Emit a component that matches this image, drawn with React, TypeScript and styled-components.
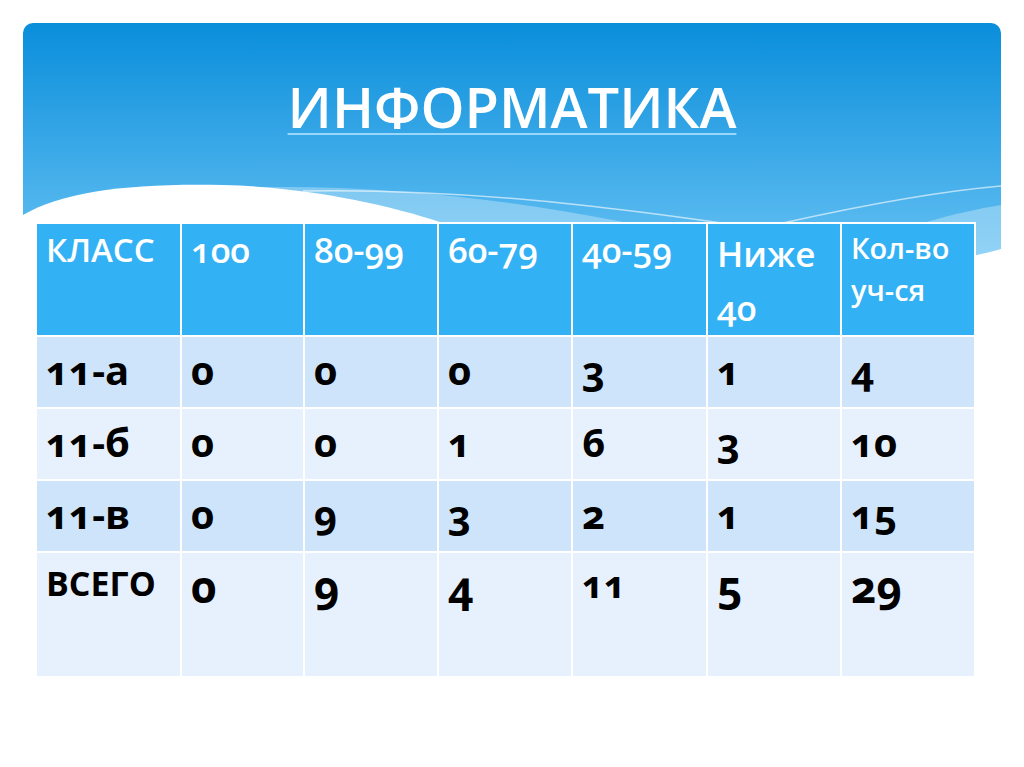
import styled, { createGlobalStyle } from 'styled-components';

const GlobalStyle = createGlobalStyle`
	html, body {
		margin: 0;
		padding: 0;
		background: #ffffff;
	}
	body {
		font-family: "Open Sans", "Noto Sans", "DejaVu Sans", sans-serif;
	}
`

type Cell = {
	text: string
	size?: number
}

const widths = [145, 123, 134, 134, 135, 134, 134];

const head: Cell[] = [
	{ text: 'КЛАСС', size: 33 },
	{ text: '100' },
	{ text: '80-99' },
	{ text: '60-79' },
	{ text: '40-59' },
	{ text: 'Ниже 40' },
	{ text: 'Кол-во уч-ся', size: 29 },
];

const rows: Cell[][] = [
	[{ text: '11-а' }, { text: '0' }, { text: '0' }, { text: '0' }, { text: '3' }, { text: '1' }, { text: '4' }],
	[{ text: '11-б' }, { text: '0' }, { text: '0' }, { text: '1' }, { text: '6' }, { text: '3' }, { text: '10' }],
	[{ text: '11-в' }, { text: '0' }, { text: '9' }, { text: '3' }, { text: '2' }, { text: '1' }, { text: '15' }],
	[{ text: 'ВСЕГО', size: 34 }, { text: '0', size: 44 }, { text: '9', size: 44 }, { text: '4', size: 44 }, { text: '11', size: 38 }, { text: '5', size: 44 }, { text: '29', size: 44 }],
];

const Banner = () => (
	<StyledBanner viewBox="0 0 978 240" width="978" height="240">
		<defs>
			<linearGradient id="sky" x1="0" y1="0" x2="0" y2="1">
				<stop offset="0" stopColor="#0a8edb" />
				<stop offset="1" stopColor="#66c1f3" />
			</linearGradient>
		</defs>
		<path d="M10 0 H968 A10 10 0 0 1 978 10 V240 H0 V10 A10 10 0 0 1 10 0 Z" fill="url(#sky)" />
		<path d="M120 172 C 300 150, 520 175, 700 222 L 700 240 L 0 240 Z" fill="#ffffff" opacity="0.3" />
		<path d="M280 168 C 500 164, 700 200, 960 240" stroke="#ffffff" strokeOpacity="0.6" strokeWidth="1.5" fill="none" />
		<path d="M760 200 C 850 180, 920 168, 978 163" stroke="#ffffff" strokeOpacity="0.6" strokeWidth="1.5" fill="none" />
		<path d="M800 240 C 870 205, 930 190, 978 182 V240 Z" fill="#ffffff" opacity="0.3" />
		<path d="M0 192 C 40 168, 110 160, 200 162 C 280 164, 360 180, 420 200 L 430 240 L 0 240 Z" fill="#ffffff" />
		<path d="M880 240 C 930 238, 958 232, 978 226 V240 Z" fill="#ffffff" />
	</StyledBanner>
)

export default function App() {
	return (
		<StyledSlide>
			<GlobalStyle />
			<Banner />
			<StyledContent>
				<StyledTitle>ИНФОРМАТИКА</StyledTitle>
				<StyledTable>
					<colgroup>
						{widths.map((w, i) => <StyledCol key={i} $w={w} />)}
					</colgroup>
					<thead>
						<tr>
							{head.map((c, i) => (
								<StyledTh key={i} $size={c.size} $wrap={i === 5}>{c.text}</StyledTh>
							))}
						</tr>
					</thead>
					<tbody>
						{rows.map((row, r) => (
							<StyledRow key={r} $even={r % 2 === 1} $last={r === rows.length - 1}>
								{row.map((c, i) => (
									<StyledTd key={i} $size={c.size}>{c.text}</StyledTd>
								))}
							</StyledRow>
						))}
					</tbody>
				</StyledTable>
			</StyledContent>
		</StyledSlide>
	)
}

const StyledSlide = styled.div`
	position: relative;
	width: 1024px;
	height: 767px;
	overflow: hidden;
	background: #ffffff;
`

const StyledBanner = styled.svg`
	position: absolute;
	left: 23px;
	top: 23px;
	display: block;
`

const StyledContent = styled.div`
	position: relative;
	display: flex;
	flex-direction: column;
	align-items: flex-start;
	padding: 73px 0 0 35px;
`

const StyledTitle = styled.h1`
	align-self: stretch;
	margin: 0 0 82px -35px;
	height: 67px;
	text-align: center;
	font-size: 56px;
	line-height: 67px;
	font-weight: 600;
	color: #ffffff;
	text-decoration: underline;
	text-decoration-color: #9ad6f8;
	text-decoration-thickness: 2px;
	text-underline-offset: 5px;
`

const StyledTable = styled.table`
	width: 939px;
	table-layout: fixed;
	border-collapse: collapse;
	font-variant-numeric: oldstyle-nums;
	font-feature-settings: "onum" 1;
`

const StyledCol = styled.col<{ $w: number }>`
	width: ${p => p.$w}px;
`

const StyledTh = styled.th<{ $size?: number, $wrap?: boolean }>`
	height: 108px;
	padding: 3px 8px 0 9px;
	vertical-align: top;
	text-align: left;
	background: #33b1f5;
	border: 2px solid #ffffff;
	color: #ffffff;
	font-size: ${p => p.$size ?? 35}px;
	font-weight: 600;
	line-height: ${p => p.$wrap ? 54 : p.$size && p.$size < 30 ? 42 : 46}px;
`

const StyledRow = styled.tr<{ $even: boolean, $last: boolean }>`
	height: ${p => p.$last ? 124 : 72}px;
	background: ${p => p.$even ? '#e7f1fd' : '#cde4fb'};
`

const StyledTd = styled.td<{ $size?: number }>`
	padding: ${p => p.$size && p.$size < 40 ? 6 : 9}px 8px 0 9px;
	vertical-align: top;
	border: 2px solid #ffffff;
	border-bottom: none;
	color: #000000;
	font-size: ${p => p.$size ?? 40}px;
	font-weight: 700;
	line-height: 48px;
`
